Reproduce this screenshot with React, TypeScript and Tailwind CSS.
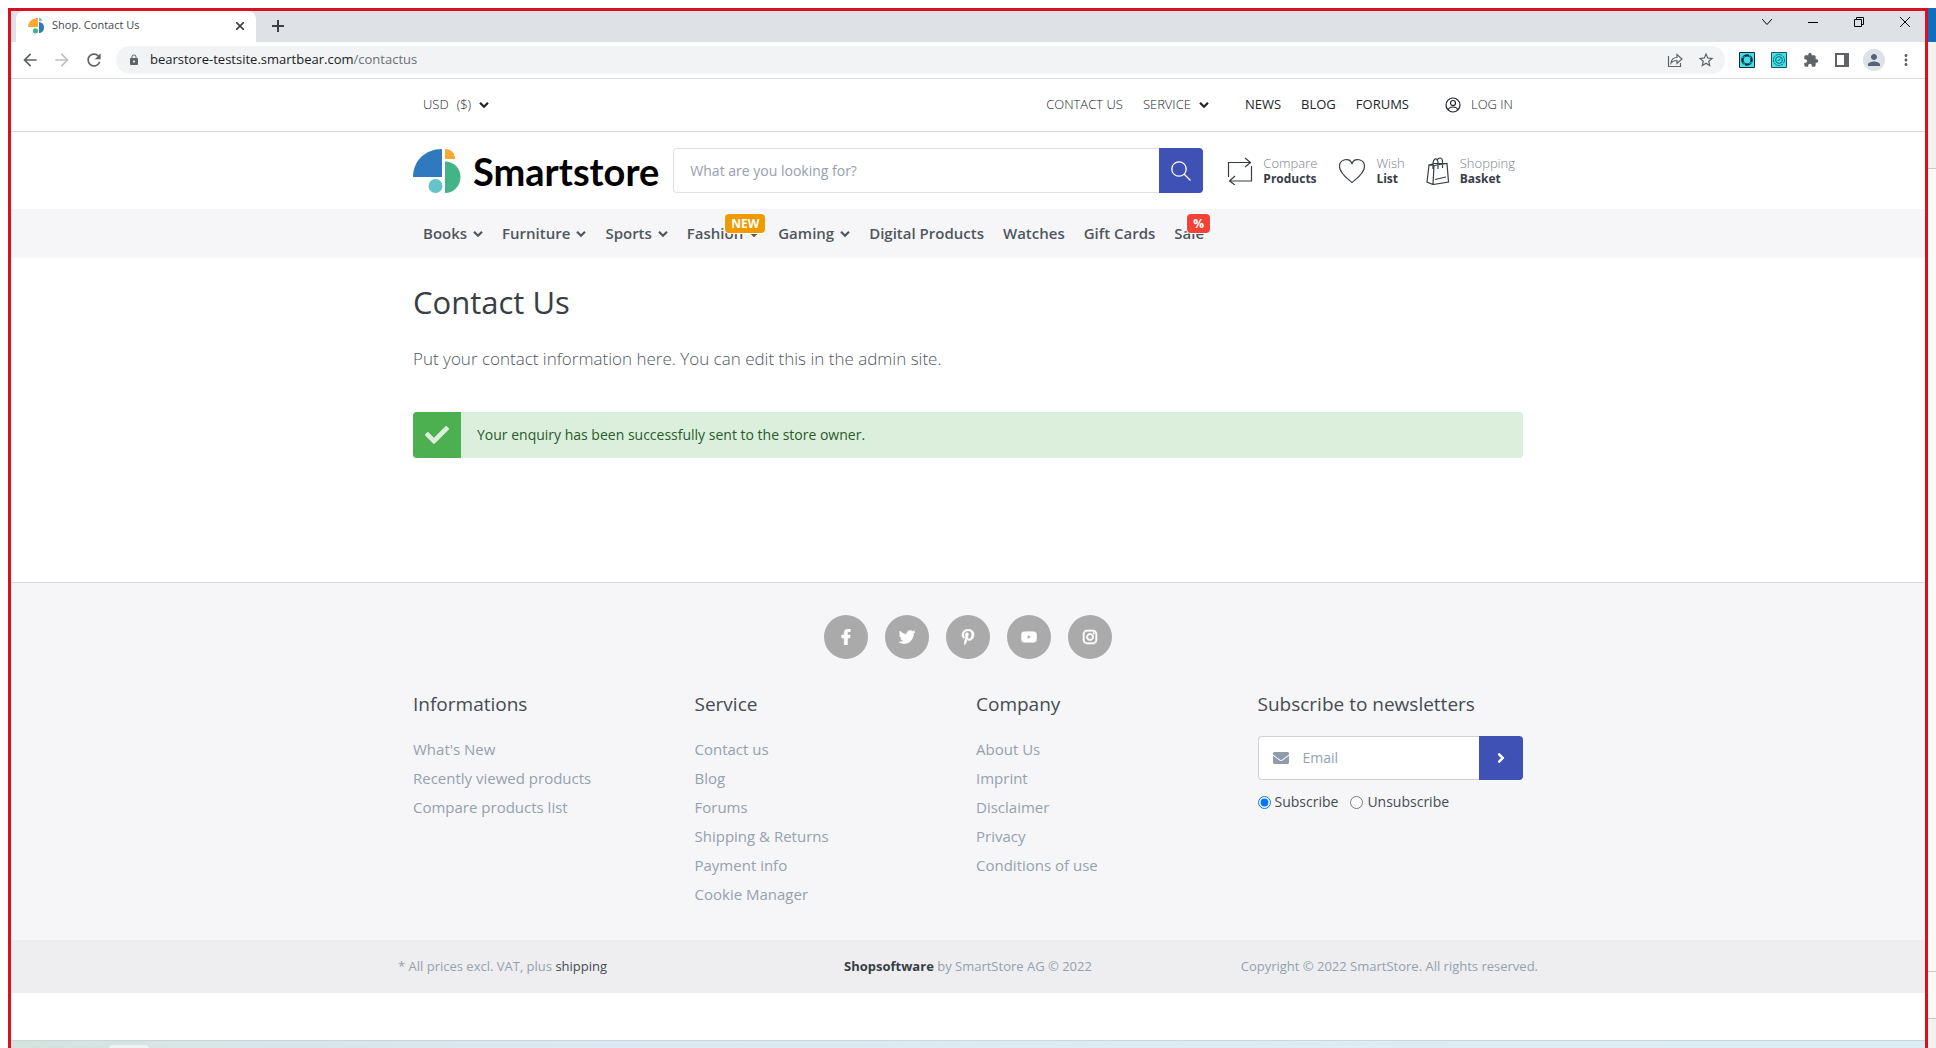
import React from "react";
import {
  FaAngleRight,
  FaCheck,
  FaEnvelope,
  FaFacebookF,
  FaInstagram,
  FaPinterestP,
  FaTwitter,
  FaYoutube,
} from "react-icons/fa";
import { MdArrowBack, MdArrowForward, MdExtension, MdLock, MdMoreVert, MdPerson, MdRefresh, MdStarBorder } from "react-icons/md";

function TabIcon() {
  return (
    <svg viewBox="0 0 16 16" className="size-4">
      <path d="M10 0v9H0C0 4 4 0 10 0z" fill="#f9a833" />
      <path d="M11 0a3 3 0 0 1 3 3h-3z" fill="#66c2cb" />
      <path d="M11 4a5 5.500 0 0 1 0 11z" fill="#2f7abf" />
      <circle cx="7.500" cy="12.800" r="2.600" fill="#45b388" />
    </svg>
  );
}

function LogoMark() {
  return (
    <svg viewBox="0 0 48 44" className="h-11 w-12">
      <path d="M29 0v28H0C0 12 12 0 29 0z" fill="#2f7abf" />
      <path d="M32 0c6 0 10 4 10 10H32z" fill="#f9a833" />
      <path d="M32 12.500c9 0 15.500 7 15.500 15.500S41 44 32 44z" fill="#45b388" />
      <circle cx="22.500" cy="37" r="7" fill="#66c2cb" />
    </svg>
  );
}

function Caret() {
  return (
    <svg viewBox="0 0 10 8" className="h-2 w-2.5" fill="none" stroke="currentColor" strokeWidth="2.200">
      <path d="M1 1.800l4 4 4-4" />
    </svg>
  );
}

function TabStrip() {
  return (
    <div className="flex h-[31px] bg-[#dee1e6]">
      <div className="w-[5px] rounded-br-lg bg-[#dee1e6]" />
      <div className="flex w-60 items-center rounded-t-lg bg-white pr-2 pb-0.5 pl-3">
        <TabIcon />
        <span className="ml-2 flex-1 text-[11px] text-[#45494d]">Shop. Contact Us</span>
        <button aria-label="Close tab" className="p-1">
          <svg viewBox="0 0 8 8" className="size-2" fill="none" stroke="#3c4043" strokeWidth="1.600">
            <path d="M0 0l8 8M8 0L0 8" />
          </svg>
        </button>
      </div>
      <button aria-label="New tab" className="ml-4 pb-0.5">
        <svg viewBox="0 0 12 12" className="size-3" fill="none" stroke="#3c4043" strokeWidth="2">
          <path d="M6 0v12M0 6h12" />
        </svg>
      </button>
      <div className="ml-auto flex items-start gap-9 pt-1.5 pr-[15px] text-black">
        <button aria-label="Search tabs">
          <svg viewBox="0 0 10 10" className="size-2.5" fill="none" stroke="currentColor">
            <path d="M0 2l5 5.500L10 2" />
          </svg>
        </button>
        <button aria-label="Minimize">
          <svg viewBox="0 0 10 10" className="size-2.5" fill="none" stroke="currentColor">
            <path d="M0 5.500h10" />
          </svg>
        </button>
        <button aria-label="Restore">
          <svg viewBox="0 0 10 10" className="size-2.5" fill="none" stroke="currentColor">
            <path d="M.5 2.500h7v7h-7zM2.500 2.500v-2h7v7h-2" />
          </svg>
        </button>
        <button aria-label="Close window">
          <svg viewBox="0 0 10 10" className="size-2.5" fill="none" stroke="currentColor">
            <path d="M0 0l10 10M10 0L0 10" />
          </svg>
        </button>
      </div>
    </div>
  );
}

function Toolbar() {
  return (
    <div className="flex h-[37px] items-center border-b border-[#dadce0] pr-2.5 pl-[9px] text-[#5f6368]">
      <button aria-label="Back"><MdArrowBack className="size-5" /></button>
      <button aria-label="Forward" className="ml-3 text-[#bdc1c6]"><MdArrowForward className="size-5" /></button>
      <button aria-label="Reload" className="ml-3"><MdRefresh className="size-5" /></button>
      <div className="ml-3 flex h-7 flex-1 items-center rounded-full bg-[#f1f3f4] pr-2.5 pl-3 text-[13px]">
        <MdLock className="size-3" />
        <input aria-label="Address" className="ml-2.5 field-sizing-content text-[#202124] outline-none" defaultValue="bearstore-testsite.smartbear.com" />
        <span className="flex-1 text-[#6c7075]">/contactus</span>
        <button aria-label="Share">
          <svg viewBox="0 0 16 16" className="size-4" fill="none" stroke="currentColor" strokeWidth="1.200">
            <path d="M1.500 4v10.500h12V11M4 11c.5-4 3-5.500 6-5.500V2.500l5 4.500-5 4.500V8.500c-3 0-4.500.5-6 2.500z" />
          </svg>
        </button>
        <button aria-label="Bookmark" className="ml-3.5"><MdStarBorder className="size-[18px]" /></button>
      </div>
      <button aria-label="Extension one" className="ml-3.5">
        <svg viewBox="0 0 16 16" className="size-4">
          <path d="M.5.5h15v15H.5z" fill="#41e0ea" stroke="#0f2a3c" />
          <circle cx="8" cy="8" r="4.600" fill="none" stroke="#0f2a3c" strokeWidth="2.400" />
          <path d="M3 5.500l3-.8M10.500 3l.8 3M13 10.500l-3 .8M5.500 13l-.8-3" stroke="#41e0ea" strokeWidth=".8" />
        </svg>
      </button>
      <button aria-label="Extension two" className="ml-4">
        <svg viewBox="0 0 16 16" className="size-4">
          <path d="M.5.5h15v15H.5z" fill="#41e0ea" stroke="#1c5560" />
          <circle cx="8" cy="8" r="5.500" fill="none" stroke="#146a7c" strokeDasharray="3 .6" />
          <circle cx="8" cy="8" r="3.400" fill="none" stroke="#146a7c" />
          <path d="M6.500 8l1 1 2-2.500" fill="none" stroke="#146a7c" />
        </svg>
      </button>
      <button aria-label="Extensions" className="ml-4"><MdExtension className="size-4" /></button>
      <button aria-label="Side panel" className="ml-4">
        <svg viewBox="0 0 14 14" className="size-3.5" fill="none" stroke="currentColor">
          <path d="M1 1h12v12H1z" strokeWidth="2" />
          <path d="M11 1v12" strokeWidth="4" />
        </svg>
      </button>
      <button aria-label="Profile" className="ml-3.5 flex size-[22px] items-center justify-center rounded-full bg-[#dee1e6] text-[#55607a]">
        <MdPerson className="size-[18px]" />
      </button>
      <button aria-label="Menu" className="ml-3"><MdMoreVert className="size-[18px]" /></button>
    </div>
  );
}

function MenuBar() {
  return (
    <div className="border-b border-[#dadcdf]">
      <div className="mx-auto flex h-[52px] max-w-[1110px] items-center px-2.5 text-[13px] font-light text-[#212529]">
        <button className="flex items-center gap-2">
          <span>USD</span>
          <span>($)</span>
          <Caret />
        </button>
        <nav className="ml-auto flex items-center">
          <a href="#contact">CONTACT US</a>
          <button className="ml-5 flex items-center gap-2">
            SERVICE <Caret />
          </button>
          <a href="#news" className="ml-9 font-normal">NEWS</a>
          <a href="#blog" className="ml-5 font-normal">BLOG</a>
          <a href="#forums" className="ml-5 font-normal">FORUMS</a>
          <a href="#login" className="ml-9 flex items-center">
            <svg viewBox="0 0 16 16" className="mr-2.5 size-4" fill="none" stroke="currentColor" strokeWidth="1.200">
              <circle cx="8" cy="8" r="7" />
              <circle cx="8" cy="6" r="2.500" />
              <path d="M3.500 13c0-4 9-4 9 0" />
            </svg>
            LOG IN
          </a>
        </nav>
      </div>
    </div>
  );
}

function Tool({ top, bottom, children }: { top: string; bottom: string; children: React.ReactNode }) {
  return (
    <a href={"#" + bottom.toLowerCase()} className="flex items-center gap-2.5 text-[13px] leading-[15px]">
      {children}
      <span className="flex flex-col">
        <span className="font-light text-[#7b8289]">{top}</span>
        <span className="text-xs leading-[15px] font-bold text-[#373e45]">{bottom}</span>
      </span>
    </a>
  );
}

function Header() {
  return (
    <header className="mx-auto flex h-[77px] w-full max-w-[1110px] items-center">
      <a href="#home" className="flex items-center">
        <LogoMark />
        <span className="ml-3 font-[Lato] text-[38px] leading-none font-bold text-black">Smartstore</span>
      </a>
      <form className="ml-3.5 flex h-[45px] w-[530px]">
        <input aria-label="Search" placeholder="What are you looking for?" className="min-w-0 flex-1 rounded-l border border-r-0 border-[#dfe1e4] px-4 text-sm outline-none placeholder:text-[#95a1ae]" />
        <button type="button" aria-label="Search" className="flex w-11 items-center justify-center rounded-r bg-[#3f51b5] text-white">
          <svg viewBox="0 0 20 20" className="size-5" fill="none" stroke="currentColor" strokeWidth="1.300">
            <circle cx="8" cy="8" r="7.200" />
            <path d="M13 13l6.500 6.500" />
          </svg>
        </button>
      </form>
      <div className="flex flex-1 justify-between pr-2 pl-6 text-[#373e45]">
        <Tool top="Compare" bottom="Products">
          <svg viewBox="0 0 26 28" className="h-7 w-[26px]" fill="none" stroke="currentColor" strokeWidth="1.200">
            <path d="M1.500 20V5.500H23M18 1l5.500 4.500L18 10M24.500 9v15H3M8 19l-5.500 5L8 28" />
          </svg>
        </Tool>
        <Tool top="Wish" bottom="List">
          <svg viewBox="0 0 28 26" className="h-[26px] w-7" fill="none" stroke="currentColor" strokeWidth="1.200">
            <path d="M14 24.500C10 21 1.500 15.500 1.500 8.500 1.500 1 11.500-1 14 5.500 16.500-1 26.500 1 26.500 8.500c0 7-8.500 12.500-12.500 16z" />
          </svg>
        </Tool>
        <Tool top="Shopping" bottom="Basket">
          <svg viewBox="0 0 24 28" className="h-7 w-6" fill="none" stroke="currentColor" strokeWidth="1.200">
            <path d="M3 8L1 25l6 2.500L22.500 25 21 6.500 8 8.500zM8 8.500L7 27.500M3 8l5-1.500 13 0M9 22.500l11-2.500M7 12V6c1-6 5-5 5 0v6M11 4c1-4 5-4 5.500 0v7" />
          </svg>
        </Tool>
      </div>
    </header>
  );
}

const categories: { name: string; menu?: boolean; badge?: string; tone?: string }[] = [
  { name: "Books", menu: true },
  { name: "Furniture", menu: true },
  { name: "Sports", menu: true },
  { name: "Fashion", menu: true, badge: "NEW", tone: "bg-[#ef9a00]" },
  { name: "Gaming", menu: true },
  { name: "Digital Products" },
  { name: "Watches" },
  { name: "Gift Cards" },
  { name: "Sale", badge: "%", tone: "bg-[#f44336]" },
];

function CategoryNav() {
  return (
    <nav className="bg-[#f6f6f9]">
      <div className="mx-auto flex h-[49px] max-w-[1110px] items-center gap-[19px] px-2.5">
        {categories.map((c) => (
          <a key={c.name} href="#category" className="relative flex items-center gap-1.5 text-[15px] font-semibold text-[#4f565d]">
            {c.name}
            {c.menu && <Caret />}
            {c.badge && (
              <span className={"absolute -top-2 -right-1.5 rounded-sm px-1.5 text-xs leading-[19px] font-bold text-white ring-1 ring-white " + c.tone}>{c.badge}</span>
            )}
          </a>
        ))}
      </div>
    </nav>
  );
}

function Content() {
  return (
    <main className="mx-auto w-full max-w-[1110px] pb-[124px]">
      <h1 className="pt-6 text-[31px] leading-10 text-[#373e45]">Contact Us</h1>
      <p className="pt-6 text-[17px] leading-[26px] font-light text-[#50575e]">Put your contact information here. You can edit this in the admin site.</p>
      <div role="status" className="mt-10 flex h-[46px] items-center overflow-hidden rounded bg-[#dbefdc] text-sm text-[#285b2a]">
        <span className="flex h-full w-12 items-center justify-center bg-[#4caf50]">
          <FaCheck className="size-6 text-[#dbefdc]" />
        </span>
        <span className="ml-4">Your enquiry has been successfully sent to the store owner.</span>
      </div>
    </main>
  );
}

const socials = [
  { label: "Facebook", Icon: FaFacebookF },
  { label: "Twitter", Icon: FaTwitter },
  { label: "Pinterest", Icon: FaPinterestP },
  { label: "YouTube", Icon: FaYoutube },
  { label: "Instagram", Icon: FaInstagram },
];

const columns = [
  { title: "Informations", links: ["What's New", "Recently viewed products", "Compare products list"] },
  { title: "Service", links: ["Contact us", "Blog", "Forums", "Shipping & Returns", "Payment info", "Cookie Manager"] },
  { title: "Company", links: ["About Us", "Imprint", "Disclaimer", "Privacy", "Conditions of use"] },
];

function Newsletter() {
  return (
    <form>
      <h2 className="text-[19px] leading-6 text-[#444b52]">Subscribe to newsletters</h2>
      <div className="mt-5 flex h-11">
        <div className="flex min-w-0 flex-1 items-center rounded-l border border-r-0 border-[#ced1d9] bg-white pl-3.5">
          <FaEnvelope className="size-4 text-[#8f9ba8]" />
          <input aria-label="Email" type="email" placeholder="Email" className="ml-3.5 min-w-0 flex-1 text-sm outline-none placeholder:text-[#95a1ae]" />
        </div>
        <button type="button" aria-label="Subscribe" className="flex w-11 items-center justify-center rounded-r bg-[#3f51b5] text-white">
          <FaAngleRight className="size-4" />
        </button>
      </div>
      <div className="mt-3 flex gap-3 text-sm leading-5 text-[#444b52]">
        <label className="flex items-center gap-1">
          <input type="radio" name="newsletter" defaultChecked className="size-[13px]" />
          Subscribe
        </label>
        <label className="flex items-center gap-1">
          <input type="radio" name="newsletter" className="size-[13px]" />
          Unsubscribe
        </label>
      </div>
    </form>
  );
}

function Footer() {
  return (
    <footer>
      <div className="border-t border-[#d9dbde] bg-[#f6f6f9] pb-[31px]">
        <div className="flex justify-center gap-[17px] pt-8">
          {socials.map(({ label, Icon }) => (
            <a key={label} href="#social" aria-label={label} className="flex size-11 items-center justify-center rounded-full bg-[#aaaaaa] text-white">
              <Icon className="size-4" stroke="currentColor" strokeWidth="20" />
            </a>
          ))}
        </div>
        <div className="mx-auto grid max-w-[1110px] grid-cols-4 gap-x-4 pt-[33px]">
          {columns.map((col) => (
            <section key={col.title}>
              <h2 className="text-[19px] leading-6 text-[#444b52]">{col.title}</h2>
              <ul className="mt-[19px] text-[15px] leading-[29px] text-[#95a1ae]">
                {col.links.map((l) => (
                  <li key={l}><a href="#page">{l}</a></li>
                ))}
              </ul>
            </section>
          ))}
          <Newsletter />
        </div>
      </div>
      <div className="bg-[#eeeef0]">
        <div className="mx-auto grid h-[53px] max-w-[1140px] grid-cols-3 items-center text-[13px] text-[#95a1ae]">
          <span>* All prices excl. VAT, plus <a href="#shipping" className="text-[#444b52]">shipping</a></span>
          <span className="text-center"><a href="#software" className="font-bold text-[#373e45]">Shopsoftware</a> by SmartStore AG © 2022</span>
          <span className="text-right">Copyright © 2022 SmartStore. All rights reserved.</span>
        </div>
      </div>
    </footer>
  );
}

export default function App() {
  return (
    <div className="flex h-screen overflow-hidden bg-white pt-2 pl-2 font-['Open_Sans',sans-serif]">
      <div className="flex min-w-0 flex-1 flex-col border-x-[3px] border-t-[3px] border-[#d91022] bg-white">
        <TabStrip />
        <Toolbar />
        <MenuBar />
        <Header />
        <CategoryNav />
        <Content />
        <Footer />
        <div className="mt-auto h-2 border-t border-[#c8d8da] bg-linear-to-r from-[#d5e3dd] via-[#dce9f4] via-30% to-[#dcecf5]">
          <div className="mt-1 ml-[98px] h-1 w-10 rounded-t bg-[#edf3f1]" />
        </div>
      </div>
      <div className="flex w-2 flex-col bg-[#faf9f8]">
        <div className="h-[34px] bg-[#106ebe]" />
        <div className="h-[127px] border-b border-[#c8c6c4] bg-[#f3f2f1]" />
        <div className="mt-auto h-12 border-y border-[#c8c6c4]" />
        <div className="h-[29px] bg-[#f3f2f1]" />
      </div>
    </div>
  );
}
